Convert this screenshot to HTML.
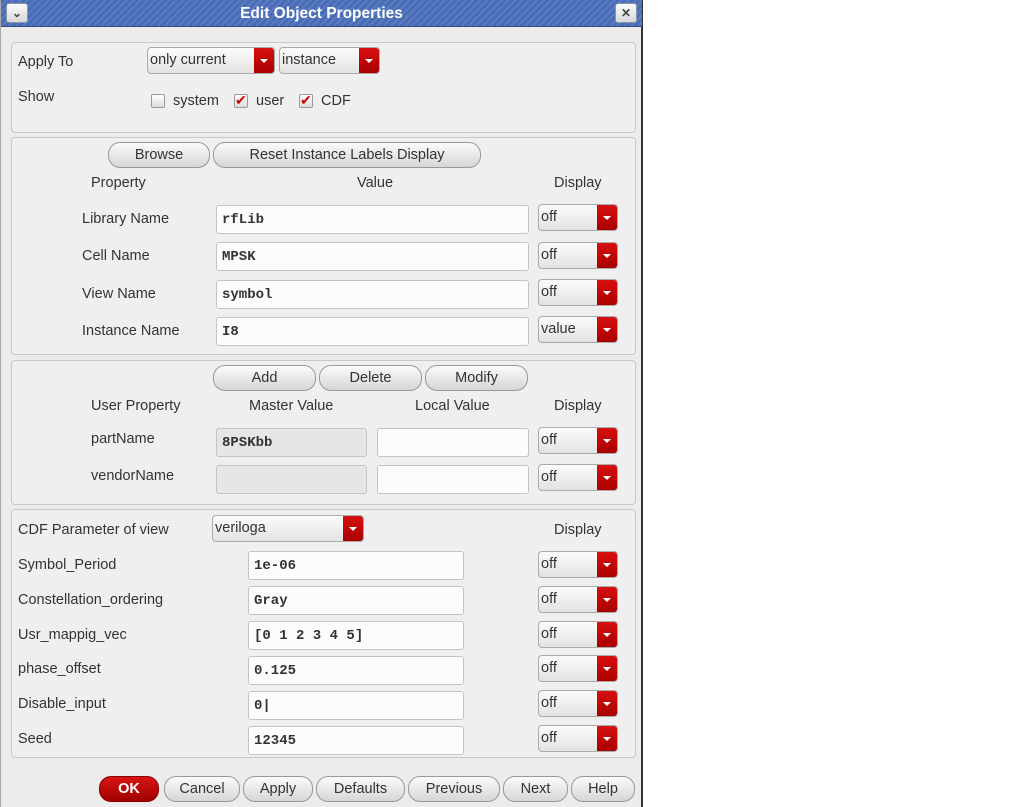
<!DOCTYPE html>
<html><head><meta charset="utf-8"><style>
*{box-sizing:border-box;margin:0;padding:0}
body{width:1012px;height:807px;background:#fff;position:relative;overflow:hidden;font-family:"Liberation Sans",sans-serif;font-size:14.5px;color:#333}
.win{position:absolute;left:0;top:0;width:643px;height:807px;background:#ececec;border-right:2px solid #333;border-left:1px solid #aaa}
.title{position:absolute;left:0;top:0;width:641px;height:27px;background:repeating-linear-gradient(135deg,#4a6cb4 0 3px,#5a7cc2 3px 5px);border-bottom:1px solid #2d4a86}
.title span{position:absolute;left:0;width:641px;text-align:center;top:5px;color:#fff;font-weight:bold;font-size:15.5px}
.tb{position:absolute;top:3px;width:22px;height:20px;background:linear-gradient(#fafafa,#d8d8d8);border:1px solid #8a94aa;border-radius:3px;color:#444;font-size:12px;text-align:center;line-height:18px;font-weight:bold}
.pn{position:absolute;left:10px;width:625px;border:1px solid #c8c8c8;border-radius:4px;background:#efefef}
.a{position:absolute;white-space:nowrap}
.dd{position:absolute;height:27px;border:1px solid #aaa;border-radius:4px;background:linear-gradient(#fcfcfc,#e2e2e2);font-size:14.5px;padding:4px 0 0 2px;overflow:hidden;color:#333}
.dd:after{content:"";position:absolute;right:0;top:0;width:20px;height:100%;background:linear-gradient(#d81010,#a80000)}
.dd:before{content:"";position:absolute;right:6px;top:11px;border-left:4px solid transparent;border-right:4px solid transparent;border-top:4px solid #fff;z-index:2}
.in{position:absolute;height:29px;background:#fcfcfc;border:1px solid #c4c4c4;border-radius:3px;font-family:"Liberation Mono",monospace;font-weight:bold;font-size:14px;padding:6px 0 0 5px;color:#333}
.btn{position:absolute;height:26px;border:1px solid #999;border-radius:12px;background:linear-gradient(#fbfbfb,#d6d6d6);text-align:center;line-height:24px;font-size:14.5px;color:#333}
.cb{position:absolute;width:14px;height:14px;border:1px solid #999;border-radius:2px;background:linear-gradient(#fff,#ddd)}
.cb.on:after{content:"✔";position:absolute;left:0;top:-3px;color:#c00;font-size:14px}
</style></head><body>
<div class="win">
<div class="title"><span>Edit Object Properties</span></div>
<div class="tb" style="left:5px">⌄</div>
<div class="tb" style="left:614px">✕</div>

<div class="pn" style="top:42px;height:91px"></div>
<div class="a" style="left:17px;top:54px">Apply To</div>
<div class="dd" style="left:146px;top:47px;width:128px">only current</div>
<div class="dd" style="left:278px;top:47px;width:101px">instance</div>
<div class="a" style="left:17px;top:89px">Show</div>
<div class="cb" style="left:150px;top:94px"></div><div class="a" style="left:172px;top:93px">system</div>
<div class="cb on" style="left:233px;top:94px"></div><div class="a" style="left:255px;top:93px">user</div>
<div class="cb on" style="left:298px;top:94px"></div><div class="a" style="left:320px;top:93px">CDF</div>

<div class="pn" style="top:137px;height:218px"></div>
<div class="btn" style="left:107px;top:142px;width:102px">Browse</div>
<div class="btn" style="left:212px;top:142px;width:268px">Reset Instance Labels Display</div>
<div class="a" style="left:90px;top:175px">Property</div>
<div class="a" style="left:356px;top:175px">Value</div>
<div class="a" style="left:553px;top:175px">Display</div>
<div class="a" style="left:81px;top:211px">Library Name</div>
<div class="in" style="left:215px;top:205px;width:313px">rfLib</div>
<div class="dd" style="left:537px;top:204px;width:80px">off</div>
<div class="a" style="left:81px;top:248px">Cell Name</div>
<div class="in" style="left:215px;top:242px;width:313px">MPSK</div>
<div class="dd" style="left:537px;top:242px;width:80px">off</div>
<div class="a" style="left:81px;top:286px">View Name</div>
<div class="in" style="left:215px;top:280px;width:313px">symbol</div>
<div class="dd" style="left:537px;top:279px;width:80px">off</div>
<div class="a" style="left:81px;top:323px">Instance Name</div>
<div class="in" style="left:215px;top:317px;width:313px">I8</div>
<div class="dd" style="left:537px;top:316px;width:80px">value</div>

<div class="pn" style="top:360px;height:145px"></div>
<div class="btn" style="left:212px;top:365px;width:103px">Add</div>
<div class="btn" style="left:318px;top:365px;width:103px">Delete</div>
<div class="btn" style="left:424px;top:365px;width:103px">Modify</div>
<div class="a" style="left:90px;top:398px">User Property</div>
<div class="a" style="left:248px;top:398px">Master Value</div>
<div class="a" style="left:414px;top:398px">Local Value</div>
<div class="a" style="left:553px;top:398px">Display</div>
<div class="a" style="left:90px;top:431px">partName</div>
<div class="in" style="left:215px;top:428px;width:151px;background:#e6e6e6">8PSKbb</div>
<div class="in" style="left:376px;top:428px;width:152px"></div>
<div class="dd" style="left:537px;top:427px;width:80px">off</div>
<div class="a" style="left:90px;top:468px">vendorName</div>
<div class="in" style="left:215px;top:465px;width:151px;background:#e6e6e6"></div>
<div class="in" style="left:376px;top:465px;width:152px"></div>
<div class="dd" style="left:537px;top:464px;width:80px">off</div>

<div class="pn" style="top:509px;height:249px"></div>
<div class="a" style="left:17px;top:522px">CDF Parameter of view</div>
<div class="dd" style="left:211px;top:515px;width:152px">veriloga</div>
<div class="a" style="left:553px;top:522px">Display</div>
<div class="a" style="left:17px;top:557px">Symbol_Period</div>
<div class="in" style="left:247px;top:551px;width:216px">1e-06</div>
<div class="dd" style="left:537px;top:551px;width:80px">off</div>
<div class="a" style="left:17px;top:592px">Constellation_ordering</div>
<div class="in" style="left:247px;top:586px;width:216px">Gray</div>
<div class="dd" style="left:537px;top:586px;width:80px">off</div>
<div class="a" style="left:17px;top:627px">Usr_mappig_vec</div>
<div class="in" style="left:247px;top:621px;width:216px">[0 1 2 3 4 5]</div>
<div class="dd" style="left:537px;top:621px;width:80px">off</div>
<div class="a" style="left:17px;top:661px">phase_offset</div>
<div class="in" style="left:247px;top:656px;width:216px">0.125</div>
<div class="dd" style="left:537px;top:655px;width:80px">off</div>
<div class="a" style="left:17px;top:696px">Disable_input</div>
<div class="in" style="left:247px;top:691px;width:216px">0|</div>
<div class="dd" style="left:537px;top:690px;width:80px">off</div>
<div class="a" style="left:17px;top:731px">Seed</div>
<div class="in" style="left:247px;top:726px;width:216px">12345</div>
<div class="dd" style="left:537px;top:725px;width:80px">off</div>

<div class="btn" style="left:98px;top:776px;width:60px;background:linear-gradient(#d81414,#a00000);border-color:#800;color:#fff;font-weight:bold">OK</div>
<div class="btn" style="left:163px;top:776px;width:76px">Cancel</div>
<div class="btn" style="left:242px;top:776px;width:70px">Apply</div>
<div class="btn" style="left:315px;top:776px;width:89px">Defaults</div>
<div class="btn" style="left:407px;top:776px;width:92px">Previous</div>
<div class="btn" style="left:502px;top:776px;width:65px">Next</div>
<div class="btn" style="left:570px;top:776px;width:64px">Help</div>
</div>
</body></html>
